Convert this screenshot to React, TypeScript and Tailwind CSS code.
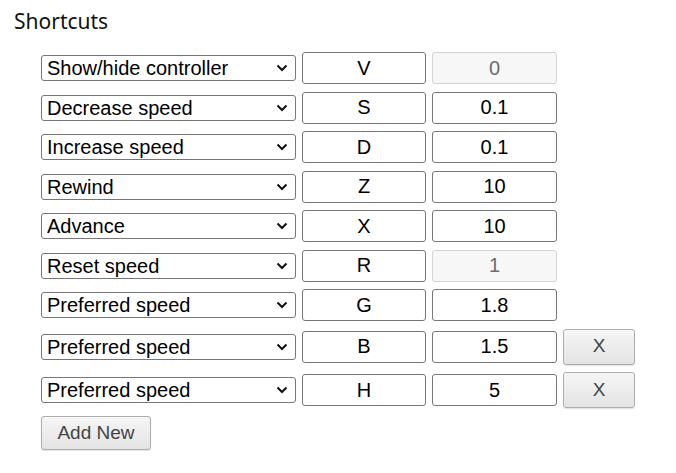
import { useState } from "react";

type Shortcut = {
  action: string;
  key: string;
  value: string;
  disabled?: boolean;
  removable?: boolean;
};

const ACTIONS = [
  "Show/hide controller",
  "Decrease speed",
  "Increase speed",
  "Rewind",
  "Advance",
  "Reset speed",
  "Preferred speed",
];

const initial: Shortcut[] = [
  { action: "Show/hide controller", key: "V", value: "0", disabled: true },
  { action: "Decrease speed", key: "S", value: "0.1" },
  { action: "Increase speed", key: "D", value: "0.1" },
  { action: "Rewind", key: "Z", value: "10" },
  { action: "Advance", key: "X", value: "10" },
  { action: "Reset speed", key: "R", value: "1", disabled: true },
  { action: "Preferred speed", key: "G", value: "1.8" },
  { action: "Preferred speed", key: "B", value: "1.5", removable: true },
  { action: "Preferred speed", key: "H", value: "5", removable: true },
];

const field = "font-['Liberation_Sans',Arial,sans-serif] text-[20px]";
const btn =
  "rounded-[3px] border border-[#adadad] bg-gradient-to-b from-[#f6f6f6] to-[#e3e3e3] text-[#444] shadow-[0_1px_1px_rgba(0,0,0,0.12)] font-['Liberation_Sans',Arial,sans-serif] text-[19px]";

const Chevron = () => (
  <svg
    width="12"
    height="8"
    viewBox="0 0 12 8"
    className="pointer-events-none absolute right-[8px] top-1/2 -translate-y-1/2"
  >
    <path d="M1.5 1.5 L6 6 L10.5 1.5" fill="none" stroke="#111" strokeWidth="2" />
  </svg>
);

export default function App() {
  const [rows, setRows] = useState(initial);

  const update = (i: number, patch: Partial<Shortcut>) => {
    setRows(rows.map((r, j) => (j === i ? { ...r, ...patch } : r)));
  };

  return (
    <div className="min-h-[473px] bg-white pl-[14px] pt-[7px]">
      <h1 className="font-['Noto_Sans',sans-serif] text-[21px] leading-[28px] font-normal text-[#111]">
        Shortcuts
      </h1>

      <div className="mt-[17px] flex flex-col gap-[7.5px] pl-[27px]">
        {rows.map((r, i) => (
          <div key={i} className="flex items-center gap-[6px]">
            <div className="relative">
              <select
                value={r.action}
                onChange={(e) => update(i, { action: e.target.value })}
                className={`${field} h-[26px] w-[255px] appearance-none rounded-[3px] border border-[#767676] bg-white pl-[5px] leading-[24px] text-black outline-none`}
              >
                {ACTIONS.map((a) => (
                  <option key={a}>{a}</option>
                ))}
              </select>
              <Chevron />
            </div>
            <input
              value={r.key}
              readOnly
              className={`${field} h-[32px] w-[124px] rounded-[3px] border border-[#767676] bg-white text-center text-black outline-none`}
            />
            {r.disabled ? (
              <input
                value={r.value}
                disabled
                className={`${field} h-[32px] w-[125px] rounded-[3px] border border-[#d3d3d3] bg-[#f7f7f7] text-center text-[#6d6d6d] outline-none`}
              />
            ) : (
              <input
                value={r.value}
                onChange={(e) => update(i, { value: e.target.value })}
                className={`${field} h-[32px] w-[125px] rounded-[3px] border border-[#767676] bg-white text-center text-black outline-none`}
              />
            )}
            {r.removable && (
              <button
                type="button"
                onClick={() => setRows(rows.filter((_, j) => j !== i))}
                className={`${btn} h-[36px] w-[72px]`}
              >
                X
              </button>
            )}
          </div>
        ))}

        <div className="pt-[0.5px]">
          <button
            type="button"
            onClick={() =>
              setRows([
                ...rows,
                { action: "Preferred speed", key: "", value: "1", removable: true },
              ])
            }
            className={`${btn} h-[34px] w-[110px]`}
          >
            Add New
          </button>
        </div>
      </div>
    </div>
  );
}
